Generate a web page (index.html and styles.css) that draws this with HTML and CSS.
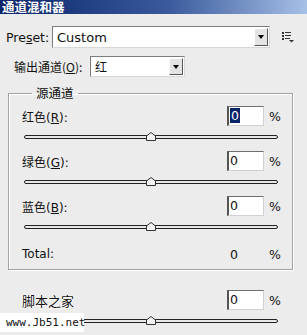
FILE: index.html
```html
<!doctype html>
<html lang="zh">
  <head>
    <meta charset="UTF-8" />
    <title>通道混和器</title>
    <link rel="stylesheet" href="styles.css">
  </head>
  <body>
    <div class="dialog">
      <div class="titlebar">通道混和器</div>

      <div class="preset-row">
        <span class="label">Pre<u>s</u>et:</span>
        <div class="select wide">
          <span class="value">Custom</span>
          <span class="arrow"><i></i></span>
        </div>
        <svg class="menu-icon" width="12" height="11" viewBox="0 0 12 11">
          <rect x="0" y="0" width="2" height="2" fill="#333" />
          <rect x="3" y="0" width="6" height="1" fill="#333" />
          <rect x="0" y="3" width="2" height="2" fill="#333" />
          <rect x="3" y="3" width="6" height="1" fill="#333" />
          <rect x="0" y="6" width="2" height="2" fill="#333" />
          <rect x="3" y="6" width="5" height="1" fill="#333" />
          <polygon points="7,8 12,8 9.5,10.5" fill="#333" />
        </svg>
      </div>

      <div class="output-row">
        <span class="label">输出通道(<u>O</u>):</span>
        <div class="select narrow">
          <span class="value">红</span>
          <span class="arrow"><i></i></span>
        </div>
      </div>

      <fieldset class="group">
        <legend>源通道</legend>

        <div class="channel">
          <div class="row">
            <span class="label">红色(<u>R</u>):</span>
            <span class="field"><span class="sel">0</span></span>
            <span class="pct">%</span>
          </div>
          <div class="slider">
            <svg class="thumb" width="10" height="9" viewBox="0 0 10 9"><polygon points="0.5,8.5 0.5,4 5,0.5 9.5,4 9.5,8.5" /></svg>
          </div>
        </div>

        <div class="channel">
          <div class="row">
            <span class="label">绿色(<u>G</u>):</span>
            <span class="field">0</span>
            <span class="pct">%</span>
          </div>
          <div class="slider">
            <svg class="thumb" width="10" height="9" viewBox="0 0 10 9"><polygon points="0.5,8.5 0.5,4 5,0.5 9.5,4 9.5,8.5" /></svg>
          </div>
        </div>

        <div class="channel">
          <div class="row">
            <span class="label">蓝色(<u>B</u>):</span>
            <span class="field">0</span>
            <span class="pct">%</span>
          </div>
          <div class="slider">
            <svg class="thumb" width="10" height="9" viewBox="0 0 10 9"><polygon points="0.5,8.5 0.5,4 5,0.5 9.5,4 9.5,8.5" /></svg>
          </div>
        </div>

        <div class="row total">
          <span class="label">Total:</span>
          <span class="total-value">0</span>
          <span class="pct">%</span>
        </div>
      </fieldset>

      <div class="constant">
        <div class="row">
          <span class="label mark">脚本之家</span>
          <span class="field">0</span>
          <span class="pct">%</span>
        </div>
        <div class="slider">
          <svg class="thumb" width="10" height="9" viewBox="0 0 10 9"><polygon points="0.5,8.5 0.5,4 5,0.5 9.5,4 9.5,8.5" /></svg>
        </div>
        <span class="url">www.Jb51.net</span>
      </div>
    </div>
  </body>
</html>
```

FILE: styles.css
```css
body {
  margin: 0;
  background: #ececec;
  font-family: "DejaVu Sans", "Noto Sans CJK SC", sans-serif;
  font-size: 12px;
  color: #111;
  overflow: hidden;
}

u {
  text-decoration: underline;
}

.dialog {
  position: relative;
  width: 307px;
  height: 335px;
}

.titlebar {
  height: 14px;
  line-height: 14px;
  padding-left: 2px;
  background: linear-gradient(to right, #0a246a 0%, #3a5a9c 55%, #a6c0e6 100%);
  color: #fff;
  font-family: "Noto Sans CJK SC", sans-serif;
  font-weight: bold;
  font-size: 12.5px;
}

.preset-row {
  display: flex;
  align-items: center;
  margin-top: 12px;
  height: 22px;
  padding-left: 6px;
}

.preset-row .label {
  width: 46px;
  font-size: 12.5px;
}

.select {
  display: flex;
  align-items: center;
  background: #fff;
  border-top: 1px solid #7c7c7c;
  border-left: 1px solid #7c7c7c;
  border-right: 1px solid #d8d8d8;
  border-bottom: 1px solid #d8d8d8;
  box-sizing: border-box;
}

.select.wide {
  width: 218px;
  height: 22px;
}

.select.narrow {
  width: 95px;
  height: 21px;
}

.select .value {
  flex: 1;
  padding-left: 4px;
  font-size: 13px;
}

.select.narrow .value {
  font-family: "Noto Sans CJK SC", sans-serif;
  font-size: 12px;
}

.arrow {
  width: 14px;
  height: calc(100% - 2px);
  margin-right: 1px;
  background: #e4e4e4;
  border-top: 1px solid #fff;
  border-left: 1px solid #fff;
  border-right: 1px solid #555;
  border-bottom: 1px solid #555;
  box-sizing: border-box;
  display: flex;
  align-items: center;
  justify-content: center;
}

.arrow i {
  width: 0;
  height: 0;
  border-left: 3.5px solid transparent;
  border-right: 3.5px solid transparent;
  border-top: 4px solid #000;
}

.menu-icon {
  margin-left: 12px;
}

.output-row {
  display: flex;
  align-items: center;
  margin-top: 8px;
  height: 21px;
  padding-left: 14px;
}

.output-row .label {
  width: 76px;
  font-family: "Noto Sans CJK SC", sans-serif;
}

.group {
  margin: 9px 0 0 8px;
  width: 285px;
  box-sizing: border-box;
  border: 1px solid #a2a2a2;
  box-shadow: inset 1px 1px 0 #fff, 1px 1px 0 #fff;
  padding: 6px 9px 5px 13px;
}

.group legend {
  margin-left: 10px;
  padding: 0 4px;
  font-family: "Noto Sans CJK SC", sans-serif;
  font-size: 12.5px;
  line-height: 14px;
}

.row {
  display: flex;
  align-items: center;
  height: 20px;
}

.row .label {
  flex: 1;
  font-family: "DejaVu Sans", "Noto Sans CJK SC", sans-serif;
}

.field {
  width: 37px;
  height: 20px;
  box-sizing: border-box;
  background: #fff;
  border-top: 1px solid #6e6e6e;
  border-left: 2px solid #555;
  border-right: 1px solid #d0d0d0;
  border-bottom: 1px solid #d0d0d0;
  padding-left: 1px;
  line-height: 18px;
  font-size: 12.5px;
}

.field .sel {
  background: #0a246a;
  color: #fff;
  padding: 0 1px;
}

.pct {
  width: 14px;
  margin-left: 5px;
  font-size: 12.5px;
}

.channel {
  height: 45px;
}

.slider {
  position: relative;
  margin: 9px 5px 0 2px;
  height: 4px;
  box-sizing: border-box;
  border: 1px solid #222;
  border-radius: 2px;
  background: #e8e8e8;
}

.thumb {
  position: absolute;
  left: 50%;
  bottom: -3px;
  margin-left: -5px;
  display: block;
}

.thumb polygon {
  fill: #f2f2f2;
  stroke: #333;
}

.total {
  margin-top: 3px;
}

.total-value {
  width: 37px;
  padding-left: 3px;
  box-sizing: border-box;
  font-size: 12.5px;
}

.constant {
  position: relative;
  margin-top: 20px;
  padding: 0 24px 0 22px;
}

.constant .slider {
  margin-top: 9px;
}

.mark {
  font-family: "Noto Sans CJK SC", sans-serif;
  font-size: 13px;
  color: #111;
  text-shadow: 1px 0 0 #fff, -1px 0 0 #fff, 0 1px 0 #fff;
}

.url {
  position: absolute;
  left: 0;
  top: 23px;
  width: 78px;
  padding-left: 6px;
  background: #fff;
  font-family: "DejaVu Sans Mono", monospace;
  font-size: 11px;
  line-height: 19px;
  color: #111;
}
```
